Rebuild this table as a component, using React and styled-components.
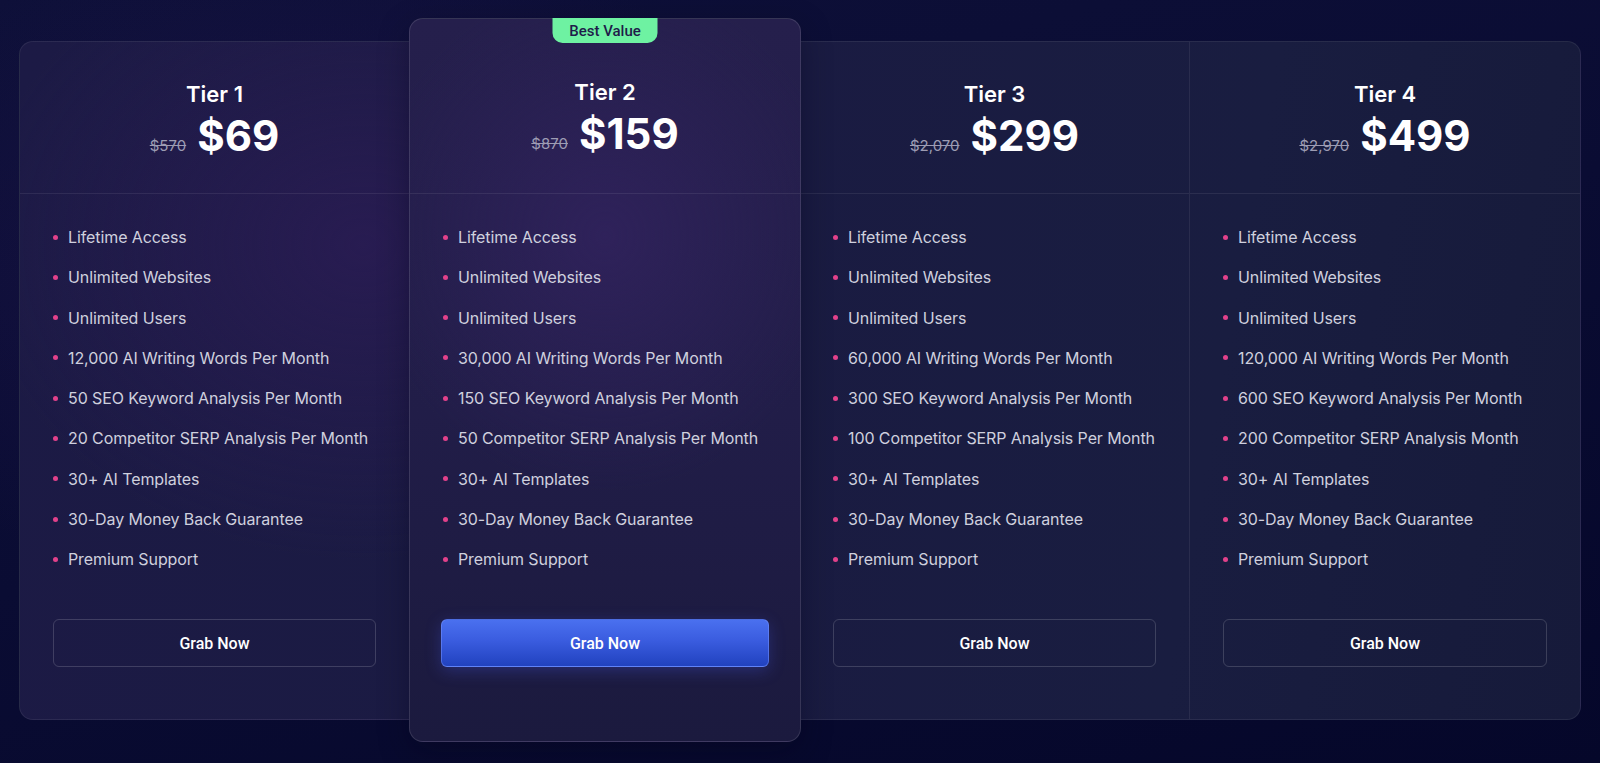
import React from "react";
import styled, { createGlobalStyle } from "styled-components";

const tiers = [
  {
    name: "Tier 1",
    old: "$570",
    price: "$69",
    features: [
      "Lifetime Access",
      "Unlimited Websites",
      "Unlimited Users",
      "12,000 AI Writing Words Per Month",
      "50 SEO Keyword Analysis Per Month",
      "20 Competitor SERP Analysis Per Month",
      "30+ AI Templates",
      "30-Day Money Back Guarantee",
      "Premium Support"
    ]
  },
  {
    name: "Tier 2",
    old: "$870",
    price: "$159",
    featured: true,
    features: [
      "Lifetime Access",
      "Unlimited Websites",
      "Unlimited Users",
      "30,000 AI Writing Words Per Month",
      "150 SEO Keyword Analysis Per Month",
      "50 Competitor SERP Analysis Per Month",
      "30+ AI Templates",
      "30-Day Money Back Guarantee",
      "Premium Support"
    ]
  },
  {
    name: "Tier 3",
    old: "$2,070",
    price: "$299",
    features: [
      "Lifetime Access",
      "Unlimited Websites",
      "Unlimited Users",
      "60,000 AI Writing Words Per Month",
      "300 SEO Keyword Analysis Per Month",
      "100 Competitor SERP Analysis Per Month",
      "30+ AI Templates",
      "30-Day Money Back Guarantee",
      "Premium Support"
    ]
  },
  {
    name: "Tier 4",
    old: "$2,970",
    price: "$499",
    features: [
      "Lifetime Access",
      "Unlimited Websites",
      "Unlimited Users",
      "120,000 AI Writing Words Per Month",
      "600 SEO Keyword Analysis Per Month",
      "200 Competitor SERP Analysis Month",
      "30+ AI Templates",
      "30-Day Money Back Guarantee",
      "Premium Support"
    ]
  }
];

const GlobalStyle = createGlobalStyle`
  html, body {
    margin: 0;
    padding: 0;
    background: #0a0c33;
  }
  * {
    box-sizing: border-box;
  }
`;

export const PricingItem = ({ name, old, price, features, featured, last }) => {
  return (
    <Column $featured={featured} $last={last}>
      {featured && <Badge>Best Value</Badge>}
      <Header $featured={featured}>
        <TierName>{name}</TierName>
        <PriceRow>
          <OldPrice>{old}</OldPrice>
          <Price>{price}</Price>
        </PriceRow>
      </Header>
      <Features>
        {features.map((f) => (
          <Feature key={f}>
            <Dot />
            {f}
          </Feature>
        ))}
      </Features>
      <ButtonWrap $featured={featured}>
        <GrabButton $featured={featured}>Grab Now</GrabButton>
      </ButtonWrap>
    </Column>
  );
};

const App = () => {
  return (
    <Page>
      <GlobalStyle />
      <Table>
        {tiers.map((t, i) => (
          <PricingItem key={t.name} {...t} last={i === tiers.length - 1} />
        ))}
      </Table>
    </Page>
  );
};

const Page = styled.div`
  min-height: 763px;
  padding: 41px 19px 0 19px;
  background:
    radial-gradient(ellipse 700px 500px at 20% 35%, rgba(60, 30, 110, 0.25), transparent 70%),
    linear-gradient(165deg, #0e1039 0%, #0a0c33 50%, #05072a 100%);
`;

const Table = styled.div`
  display: grid;
  grid-template-columns: repeat(4, 1fr);
  height: 679px;
  border: 1px solid rgba(255, 255, 255, 0.07);
  border-radius: 14px;
  background:
    radial-gradient(ellipse 520px 420px at 22% 30%, rgba(44, 28, 86, 0.75), transparent 75%),
    linear-gradient(100deg, #1c1a45 0%, #1a1b42 45%, #191d40 75%, #161a3a 100%);
`;

const Column = styled.div`
  position: relative;
  display: flex;
  flex-direction: column;
  min-width: 0;
  margin: ${(p) => (p.$featured ? "-24px -1px -23px" : "0")};
  border-right: ${(p) =>
    p.$featured || p.$last ? "none" : "1px solid rgba(255, 255, 255, 0.07)"};
  ${(p) =>
    p.$featured &&
    `
    z-index: 1;
    border: 1px solid rgba(255, 255, 255, 0.12);
    border-radius: 14px;
    background:
      radial-gradient(ellipse 300px 320px at 50% 30%, rgba(48, 34, 92, 0.9), transparent 80%),
      linear-gradient(180deg, #251f4c 0%, #211d48 55%, #1b1a3e 100%);
    box-shadow: 0 10px 30px rgba(5, 5, 25, 0.35);
  `}
`;

const Badge = styled.div`
  position: absolute;
  top: -1px;
  left: 50%;
  transform: translateX(-50%);
  width: 105px;
  height: 25px;
  display: flex;
  align-items: center;
  justify-content: center;
  background: #6ef2a2;
  color: #1f1c4a;
  border-radius: 0 0 10px 10px;
  font-family: Roboto, "Liberation Sans", sans-serif;
  font-weight: 500;
  font-size: 15px;
`;

const Header = styled.div`
  display: flex;
  flex-direction: column;
  align-items: center;
  height: ${(p) => (p.$featured ? "175px" : "152px")};
  padding-top: ${(p) => (p.$featured ? "60px" : "39px")};
  border-bottom: 1px solid rgba(255, 255, 255, 0.08);
  font-family: Inter, "Noto Sans", sans-serif;
  color: #ffffff;
`;

const TierName = styled.div`
  font-size: 22px;
  font-weight: 600;
  line-height: 26px;
`;

const PriceRow = styled.div`
  display: flex;
  align-items: baseline;
  gap: 11px;
  margin-top: 6px;
`;

const OldPrice = styled.span`
  font-size: 15px;
  color: #9d9cb3;
  text-decoration: line-through;
`;

const Price = styled.span`
  font-size: 42px;
  font-weight: 700;
  line-height: 46px;
`;

const Features = styled.ul`
  list-style: none;
  margin: 0;
  padding: 31px 0 0 33px;
  display: flex;
  flex-direction: column;
  gap: 16.3px;
  font-family: Inter, "Noto Sans", sans-serif;
`;

const Feature = styled.li`
  display: flex;
  align-items: center;
  gap: 10px;
  font-size: 16px;
  line-height: 24px;
  letter-spacing: -0.1px;
  color: #cfd0de;
  white-space: nowrap;
`;

const Dot = styled.span`
  width: 5px;
  height: 5px;
  border-radius: 50%;
  background: #e2418b;
  flex-shrink: 0;
`;

const ButtonWrap = styled.div`
  padding: ${(p) => (p.$featured ? "0 31px" : "0 33px")};
  margin-top: 48px;
`;

const GrabButton = styled.button`
  display: block;
  width: 100%;
  height: 48px;
  border-radius: 6px;
  font-family: Roboto, "Liberation Sans", sans-serif;
  font-weight: 500;
  font-size: 16px;
  color: #ffffff;
  cursor: pointer;
  border: 1px solid
    ${(p) => (p.$featured ? "rgba(120, 150, 255, 0.5)" : "rgba(255, 255, 255, 0.16)")};
  background: ${(p) =>
    p.$featured
      ? "linear-gradient(180deg, #4a70ef 0%, #3a5cdf 45%, #2142bf 100%)"
      : "transparent"};
  box-shadow: ${(p) =>
    p.$featured ? "0 4px 16px rgba(70, 90, 230, 0.3)" : "none"};
`;

export default App;
